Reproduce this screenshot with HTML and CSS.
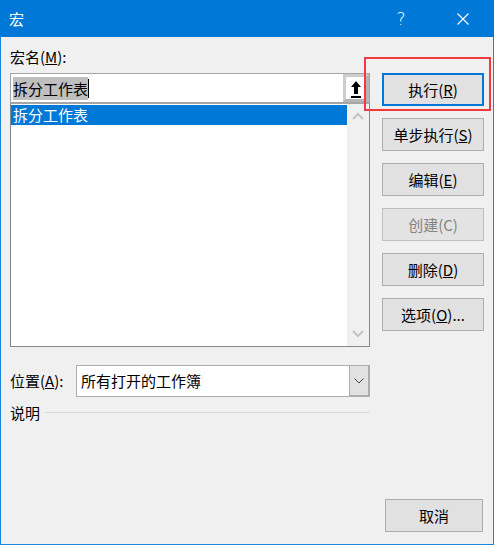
FILE: index.html
```html
<!DOCTYPE html>
<html lang="zh-CN">
<head>
<meta charset="utf-8">
<title>宏</title>
<link rel="stylesheet" href="styles.css">
</head>
<body>
<div class="window">
  <div class="titlebar">
    <span class="title">宏</span>
    <span class="help">?</span>
    <span class="close">
      <svg width="12" height="12" viewBox="0 0 12 12"><path d="M0.5 0.5 L11.5 11.5 M11.5 0.5 L0.5 11.5" stroke="#fff" stroke-width="1.1" fill="none"/></svg>
    </span>
  </div>
  <div class="main">
    <div class="left">
      <div class="label">宏名(<u>M</u>):</div>
      <div class="namebox">
        <div class="namefield"><span class="sel">拆分工作表</span><span class="caret"></span></div>
        <div class="upbtn">
          <svg width="18" height="21" viewBox="0 0 18 21"><path d="M9 3 L14 9 L11 9 L11 16 L7 16 L7 9 L4 9 Z" fill="#000"/><rect x="4" y="18" width="10" height="2" fill="#000"/></svg>
        </div>
      </div>
      <div class="listbox">
        <div class="items">
          <div class="item selected">拆分工作表</div>
        </div>
        <div class="scrollbar">
          <svg width="12" height="8" viewBox="0 0 12 8"><path d="M1 7 L6 2 L11 7" stroke="#c4c4c4" stroke-width="2" fill="none"/></svg>
          <svg width="12" height="8" viewBox="0 0 12 8"><path d="M1 1 L6 6 L11 1" stroke="#c4c4c4" stroke-width="2" fill="none"/></svg>
        </div>
      </div>
      <div class="locrow">
        <span class="loclabel">位置(<u>A</u>):</span>
        <div class="select">
          <span class="selval">所有打开的工作簿</span>
          <span class="dropbtn">
            <svg width="10" height="6" viewBox="0 0 10 6"><path d="M0.5 0.5 L5 5 L9.5 0.5" stroke="#444" stroke-width="1" fill="none"/></svg>
          </span>
        </div>
      </div>
      <div class="descrow">
        <span>说明</span>
        <span class="rule"></span>
      </div>
    </div>
    <div class="right">
      <button class="btn default">执行(<u>R</u>)</button>
      <button class="btn">单步执行(<u>S</u>)</button>
      <button class="btn">编辑(<u>E</u>)</button>
      <button class="btn disabled">创建(C)</button>
      <button class="btn">删除(<u>D</u>)</button>
      <button class="btn">选项(<u>O</u>)...</button>
    </div>
  </div>
  <div class="footer">
    <button class="btn cancel">取消</button>
  </div>
  <div class="highlight"></div>
</div>
</body>
</html>
```

FILE: styles.css
```css
html, body {
  margin: 0;
  padding: 0;
}
body {
  font-family: "Noto Sans CJK SC", "Noto Sans", sans-serif;
  font-size: 15px;
  color: #000;
}
.window {
  position: relative;
  width: 494px;
  height: 545px;
  box-sizing: border-box;
  border: 1px solid #1a84d8;
  border-top: none;
  background: #f0f0f0;
  display: flex;
  flex-direction: column;
}
.titlebar {
  height: 37px;
  margin: 0 -1px;
  background: #0078d7;
  color: #fff;
  display: flex;
  align-items: center;
}
.title {
  flex: 1;
  padding-left: 9px;
  line-height: 20px;
}
.help {
  font-family: "DejaVu Sans", sans-serif;
  font-size: 17px;
  font-weight: 300;
  width: 20px;
  text-align: center;
  margin-right: 46px;
  line-height: 20px;
}
.close {
  display: flex;
  margin-right: 25px;
}
.main {
  display: flex;
  gap: 12px;
  padding: 0 9px;
}
.left {
  width: 360px;
}
.label {
  margin-top: 10px;
  line-height: 20px;
  height: 20px;
  margin-bottom: 6px;
}
.namebox {
  height: 30px;
  box-sizing: border-box;
  border: 1px solid #a5a5a5;
  background: #fff;
  display: flex;
}
.namefield {
  flex: 1;
  display: flex;
  align-items: center;
  padding-left: 2px;
}
.sel {
  background: #bfbfbf;
  line-height: 23px;
  height: 23px;
}
.caret {
  width: 1px;
  height: 19px;
  background: #000;
}
.upbtn {
  width: 26px;
  box-sizing: border-box;
  border: 3px solid #cdcdcd;
  border-right-color: #b5b5b5;
  border-bottom-color: #b5b5b5;
  background: #fff;
  display: flex;
  align-items: center;
  justify-content: center;
}
.listbox {
  height: 244px;
  box-sizing: border-box;
  border: 1px solid #828790;
  border-top-color: #a5a5a5;
  background: #fff;
  display: flex;
}
.items {
  flex: 1;
  padding-top: 1px;
}
.item {
  height: 20px;
  line-height: 20px;
  padding-left: 2px;
}
.item.selected {
  background: #0078d7;
  color: #fff;
}
.scrollbar {
  width: 22px;
  background: #f0f0f0;
  display: flex;
  flex-direction: column;
  justify-content: space-between;
  align-items: center;
  padding: 8px 0 8px;
}
.locrow {
  margin-top: 18px;
  height: 32px;
  display: flex;
  align-items: center;
}
.loclabel {
  width: 66px;
  line-height: 20px;
}
.select {
  flex: 1;
  height: 32px;
  box-sizing: border-box;
  border: 1px solid #adadad;
  background: #fff;
  display: flex;
}
.selval {
  flex: 1;
  line-height: 30px;
  padding-left: 4px;
}
.dropbtn {
  width: 20px;
  box-sizing: border-box;
  background: #e1e1e1;
  border-left: 1px solid #adadad;
  border-right: 1px solid #adadad;
  border-bottom: 1px solid #adadad;
  display: flex;
  align-items: center;
  justify-content: center;
}
.descrow {
  margin-top: 5px;
  height: 20px;
  display: flex;
  align-items: center;
  gap: 5px;
}
.rule {
  flex: 1;
  height: 1px;
  background: #dadada;
  margin-top: 1px;
}
.right {
  width: 102px;
  margin-top: 36px;
  display: flex;
  flex-direction: column;
  gap: 12px;
}
.btn {
  font-family: "Noto Sans CJK SC", "Noto Sans", sans-serif;
  font-size: 15px;
  color: #000;
  height: 33px;
  box-sizing: border-box;
  border: 1px solid #adadad;
  background: #e1e1e1;
  padding: 0;
  line-height: 20px;
  text-align: center;
}
.btn.default {
  border: 2px solid #0078d7;
}
.btn.disabled {
  color: #838383;
  border-color: #bfbfbf;
  background: #e3e3e3;
}
.footer {
  margin-top: auto;
  display: flex;
  justify-content: flex-end;
  padding: 0 10px 12px 0;
}
.cancel {
  width: 98px;
}
.highlight {
  position: absolute;
  left: 363px;
  top: 57px;
  width: 127px;
  height: 54px;
  box-sizing: border-box;
  border: 2px solid #ef3b3b;
}
```
